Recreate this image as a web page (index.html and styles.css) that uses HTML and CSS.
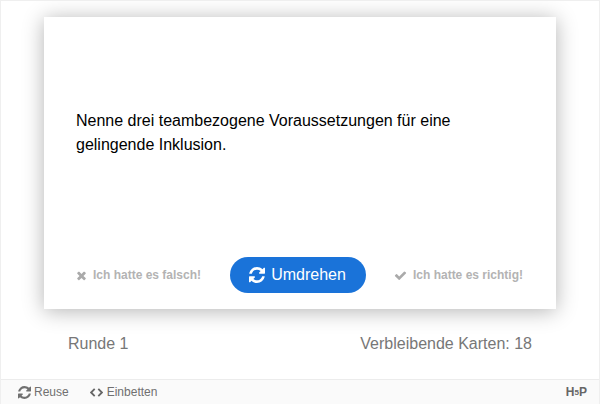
FILE: index.html
```html
<!DOCTYPE html>
<html lang="de">
<head>
    <meta charset="UTF-8">
    <meta name="viewport" content="width=device-width, initial-scale=1.0">
    <title>Karteikarten</title>
    <link rel="stylesheet" href="styles.css">
</head>
<body>

    <div class="content">
        <div class="card">
            <div class="question">
                <p>Nenne drei teambezogene Voraussetzungen für eine gelingende Inklusion.</p>
            </div>
            <div class="answer-row">
                <button class="answer">
                    <svg class="answer-icon" viewBox="0 0 1408 1792"><path d="M1298 1322q0 40-28 68l-136 136q-28 28-68 28t-68-28l-294-294-294 294q-28 28-68 28t-68-28l-136-136q-28-28-28-68t28-68l294-294-294-294q-28-28-28-68t28-68l136-136q28-28 68-28t68 28l294 294 294-294q28-28 68-28t68 28l136 136q28 28 28 68t-28 68l-294 294 294 294q28 28 28 68z"/></svg>
                    Ich hatte es falsch!
                </button>
                <button class="flip">
                    <svg class="flip-icon" viewBox="0 0 1536 1536"><path d="M1511 928q0 5-1 7-64 268-268 434.5t-478 166.5q-146 0-282.5-55t-243.5-157l-129 129q-19 19-45 19t-45-19-19-45v-448q0-26 19-45t45-19h448q26 0 45 19t19 45-19 45l-137 137q71 66 161 102t187 36q134 0 250-65t186-179q11-17 53-117 8-23 30-23h192q13 0 22.5 9.5t9.5 22.5zm25-800v448q0 26-19 45t-45 19h-448q-26 0-45-19t-19-45 19-45l138-138q-148-137-349-137-134 0-250 65t-186 179q-11 17-53 117-8 23-30 23h-199q-13 0-22.5-9.5t-9.5-22.5v-7q65-268 270-434.5t480-166.5q146 0 284 55.5t245 156.5l130-129q19-19 45-19t45 19 19 45z"/></svg>
                    Umdrehen
                </button>
                <button class="answer">
                    <svg class="answer-icon check" viewBox="0 0 1792 1792"><path d="M1671 566q0 40-28 68l-724 724-136 136q-28 28-68 28t-68-28l-136-136-362-362q-28-28-28-68t28-68l136-136q28-28 68-28t68 28l294 295 656-657q28-28 68-28t68 28l136 136q28 28 28 68z"/></svg>
                    Ich hatte es richtig!
                </button>
            </div>
        </div>
        <div class="status">
            <span>Runde 1</span>
            <span>Verbleibende Karten: 18</span>
        </div>
    </div>

    <div class="footer">
        <a class="footer-link">
            <svg class="footer-icon" viewBox="0 0 1536 1536"><path d="M1511 928q0 5-1 7-64 268-268 434.5t-478 166.5q-146 0-282.5-55t-243.5-157l-129 129q-19 19-45 19t-45-19-19-45v-448q0-26 19-45t45-19h448q26 0 45 19t19 45-19 45l-137 137q71 66 161 102t187 36q134 0 250-65t186-179q11-17 53-117 8-23 30-23h192q13 0 22.5 9.5t9.5 22.5zm25-800v448q0 26-19 45t-45 19h-448q-26 0-45-19t-19-45 19-45l138-138q-148-137-349-137-134 0-250 65t-186 179q-11 17-53 117-8 23-30 23h-199q-13 0-22.5-9.5t-9.5-22.5v-7q65-268 270-434.5t480-166.5q146 0 284 55.5t245 156.5l130-129q19-19 45-19t45 19 19 45z"/></svg>
            Reuse
        </a>
        <a class="footer-link">
            <svg class="code-icon" viewBox="0 0 14 10"><path d="M5 1 1 5l4 4M9 1l4 4-4 4"/></svg>
            Einbetten
        </a>
        <span class="logo">H<small>5</small>P</span>
    </div>

</body>
</html>
```

FILE: styles.css
```css
html, body {
    height: 100%;
}

body {
    display: flex;
    flex-direction: column;
    box-sizing: border-box;
    height: 404px;
    margin: 0;
    border: 1px solid #efefef;
    border-bottom: none;
    font-family: "Liberation Sans", Arial, sans-serif;
    background-color: #fff;
    overflow: hidden;
}

.content {
    flex: 1;
    padding: 16px 43px 0;
}

.card {
    display: flex;
    flex-direction: column;
    height: 292px;
    background-color: #fff;
    box-shadow: 0 2px 20px rgba(0, 0, 0, 0.3);
}

.question {
    display: flex;
    align-items: center;
    box-sizing: border-box;
    height: 230px;
    padding: 2px 32px 0;
    color: #000;
    font-size: 16px;
    line-height: 24px;
}

.question p {
    margin: 0;
}

.answer-row {
    display: flex;
    align-items: center;
    justify-content: space-between;
    padding: 10px 33px 0 32px;
}

button {
    border: none;
    background: none;
    font-family: inherit;
    cursor: pointer;
}

.answer {
    display: flex;
    align-items: center;
    gap: 6px;
    padding: 0;
    color: #b3b3b3;
    font-size: 12px;
    font-weight: bold;
    white-space: nowrap;
}

.answer-icon {
    width: 11px;
    height: 13px;
    fill: #aaa;
}

.check {
    width: 13px;
}

.flip {
    display: flex;
    align-items: center;
    justify-content: center;
    gap: 6px;
    width: 136px;
    height: 36px;
    padding: 0;
    border-radius: 18px;
    background-color: #1a73d9;
    color: #fff;
    font-size: 16px;
}

.flip-icon {
    width: 16px;
    height: 16px;
    fill: #fff;
}

.status {
    display: flex;
    justify-content: space-between;
    padding: 26px 24px 0;
    color: #777;
    font-size: 16px;
    line-height: 18px;
}

.footer {
    display: flex;
    align-items: center;
    gap: 21px;
    box-sizing: border-box;
    height: 25px;
    padding: 0 12px 0 17px;
    border-top: 1px solid #ececec;
    background-color: #fafafa;
    color: #707070;
    font-size: 12px;
}

.footer-link {
    display: flex;
    align-items: center;
    gap: 3px;
}

.footer-icon {
    width: 13px;
    height: 13px;
    fill: #707070;
}

.code-icon {
    width: 13px;
    height: 9px;
    margin-right: 1px;
    fill: none;
    stroke: #666;
    stroke-width: 2;
}

.logo {
    margin-left: auto;
    color: #666;
    font-size: 12px;
    font-weight: bold;
}

.logo small {
    position: relative;
    top: -1px;
    font-size: 8px;
}
```
